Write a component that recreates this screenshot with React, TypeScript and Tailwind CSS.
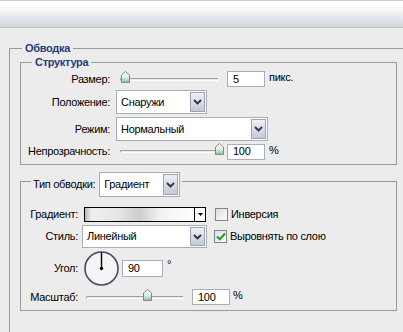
import React from "react";

const Chevron = () => (
  <svg width="9" height="6" viewBox="0 0 9 6">
    <polyline points="1,1 4.5,4.5 8,1" fill="none" stroke="#2b3042" strokeWidth="1.8" />
  </svg>
);

function Select({ cls, text }: { cls: string; text: string }) {
  return (
    <div className={`flex h-full border border-[#a9adb8] bg-white ${cls}`}>
      <div className="flex flex-1 items-center pl-[4px] text-[11px] text-black">{text}</div>
      <div className="my-[1px] mr-[1px] flex w-[15px] items-center justify-center border border-[#9ea3b6] bg-gradient-to-b from-[#eef0f6] to-[#c4c8d8]">
        <Chevron />
      </div>
    </div>
  );
}

function Input({ cls, value }: { cls: string; value: string }) {
  return (
    <div className={`flex h-[16px] items-center border border-[#a9adb8] bg-white pl-[5px] text-[11px] leading-none ${cls}`}>
      {value}
    </div>
  );
}

const Thumb = () => (
  <svg width="9" height="12" viewBox="0 0 9 12">
    <defs>
      <linearGradient id="tg" x1="0" y1="0" x2="0" y2="1">
        <stop offset="0" stopColor="#ffffff" />
        <stop offset="0.5" stopColor="#e6f2ea" />
        <stop offset="1" stopColor="#7fc49a" />
      </linearGradient>
    </defs>
    <polygon points="0.5,4 4.5,0.5 8.5,4 8.5,11.5 0.5,11.5" fill="url(#tg)" stroke="#7d8a84" strokeWidth="1" />
  </svg>
);

function Slider({ track, thumb }: { track: string; thumb: string }) {
  return (
    <div className={`relative h-[3px] rounded-l-full border-t border-l border-[#9e9e9e] border-b-white border-b ${track}`}>
      <div className={`absolute top-[-8px] ${thumb}`}>
        <Thumb />
      </div>
    </div>
  );
}

function Check({ checked }: { checked?: boolean }) {
  return (
    <div className="flex h-[13px] w-[13px] items-center justify-center border border-[#7a8796] bg-gradient-to-br from-[#dcdcdc] to-white">
      {checked && (
        <svg width="10" height="9" viewBox="0 0 10 9">
          <polyline points="1,4.5 3.8,7.2 9,1.5" fill="none" stroke="#21a121" strokeWidth="2" />
        </svg>
      )}
    </div>
  );
}

export default function App() {
  return (
    <div className="relative h-[332px] w-[403px] overflow-hidden bg-[#ececec] font-['Liberation_Sans',Arial,sans-serif] text-[11px] tracking-[-0.3px] text-black">
      <div className="h-[28px] border-t border-t-[#cfcfcf] border-b border-b-[#c2c4c8] bg-gradient-to-b from-white from-[15%] to-[#d3d6e0]" />
      <fieldset className="ml-[9px] mt-[13px] h-[330px] w-[420px] border border-[#9a9a9a] p-0">
        <legend className="ml-[12px] px-[3px] text-[11px] leading-[14px] font-bold text-[#1c3e7c]">Обводка</legend>

        <fieldset className="ml-[10px] h-[110px] w-[377px] border border-[#9a9a9a] p-0">
          <legend className="ml-[11px] px-[3px] text-[11px] leading-[14px] font-bold text-[#1c3e7c]">Структура</legend>

          <div className="flex h-[20px] items-center">
            <div className="w-[89px] text-right">Размер:</div>
            <div className="flex w-[117px] items-center pl-[10px]">
              <Slider track="w-[98px]" thumb="left-[0px]" />
            </div>
            <Input cls="w-[38px]" value="5" />
            <div className="ml-[4px] -mt-[3px]">пикс.</div>
          </div>

          <div className="mt-[1px] flex h-[24px] items-center">
            <div className="w-[89px] text-right">Положение:</div>
            <div className="ml-[6px] h-full">
              <Select cls="w-[91px]" text="Снаружи" />
            </div>
          </div>

          <div className="mt-[3px] flex h-[24px] items-center">
            <div className="w-[89px] text-right">Режим:</div>
            <div className="ml-[6px] h-full">
              <Select cls="w-[152px]" text="Нормальный" />
            </div>
          </div>

          <div className="mt-[1px] flex h-[19px] items-center">
            <div className="w-[89px] text-right">Непрозрачность:</div>
            <div className="flex w-[117px] items-center pl-[10px]">
              <Slider track="w-[98px]" thumb="left-[94px]" />
            </div>
            <Input cls="w-[38px]" value="100" />
            <div className="ml-[4px] -mt-[3px]">%</div>
          </div>
        </fieldset>

        <fieldset className="ml-[10px] mt-[7px] h-[139px] w-[377px] border border-[#9a9a9a] p-0">
          <legend className="ml-[10px] h-[18px] px-[2px]">
            <div className="flex h-[25px] items-center">
              <span className="mr-[4px]">Тип обводки:</span>
              <div className="h-full">
                <Select cls="w-[81px]" text="Градиент" />
              </div>
            </div>
          </legend>

          <div className="mt-[17px] flex h-[15px] items-center">
            <div className="w-[57px] text-right">Градиент:</div>
            <div className="ml-[6px] flex h-full w-[122px] border border-black">
              <div className="flex-1 bg-[linear-gradient(to_right,#b9b9b9_0%,#efefef_6%,#e6e6e6_30%,#cdcdcd_50%,#f1f1f1_68%,#ffffff_100%)]" />
              <div className="flex w-[11px] items-center justify-center border-l border-black bg-white">
                <svg width="5" height="3" viewBox="0 0 5 3">
                  <polygon points="0,0 5,0 2.5,3" fill="#000" />
                </svg>
              </div>
            </div>
            <div className="ml-[9px]">
              <Check />
            </div>
            <div className="ml-[3px]">Инверсия</div>
          </div>

          <div className="mt-[3px] flex h-[23px] items-center">
            <div className="w-[57px] text-right">Стиль:</div>
            <div className="ml-[4px] h-full">
              <Select cls="w-[125px]" text="Линейный" />
            </div>
            <div className="ml-[7px]">
              <Check checked />
            </div>
            <div className="ml-[3px]">Выровнять по слою</div>
          </div>

          <div className="mt-[3px] flex h-[34px] items-center">
            <div className="w-[57px] text-right">Угол:</div>
            <svg className="ml-[6px]" width="35" height="35" viewBox="0 0 35 35">
              <circle cx="17.5" cy="17.5" r="16.5" fill="#f4f4f6" stroke="#454b5e" strokeWidth="1.6" />
              <line x1="17.5" y1="17.5" x2="17.5" y2="1.5" stroke="#000" strokeWidth="1.4" />
              <circle cx="17.5" cy="17.5" r="1.7" fill="#000" />
            </svg>
            <Input cls="ml-[3px] w-[41px] h-[17px]" value="90" />
            <div className="ml-[4px] -mt-[8px]">°</div>
          </div>

          <div className="mt-[2px] flex h-[20px] items-center">
            <div className="w-[57px] text-right">Масштаб:</div>
            <div className="flex w-[114px] items-center pl-[8px]">
              <Slider track="w-[97px]" thumb="left-[56px]" />
            </div>
            <Input cls="w-[38px]" value="100" />
            <div className="ml-[3px] -mt-[3px]">%</div>
          </div>
        </fieldset>
      </fieldset>
    </div>
  );
}
